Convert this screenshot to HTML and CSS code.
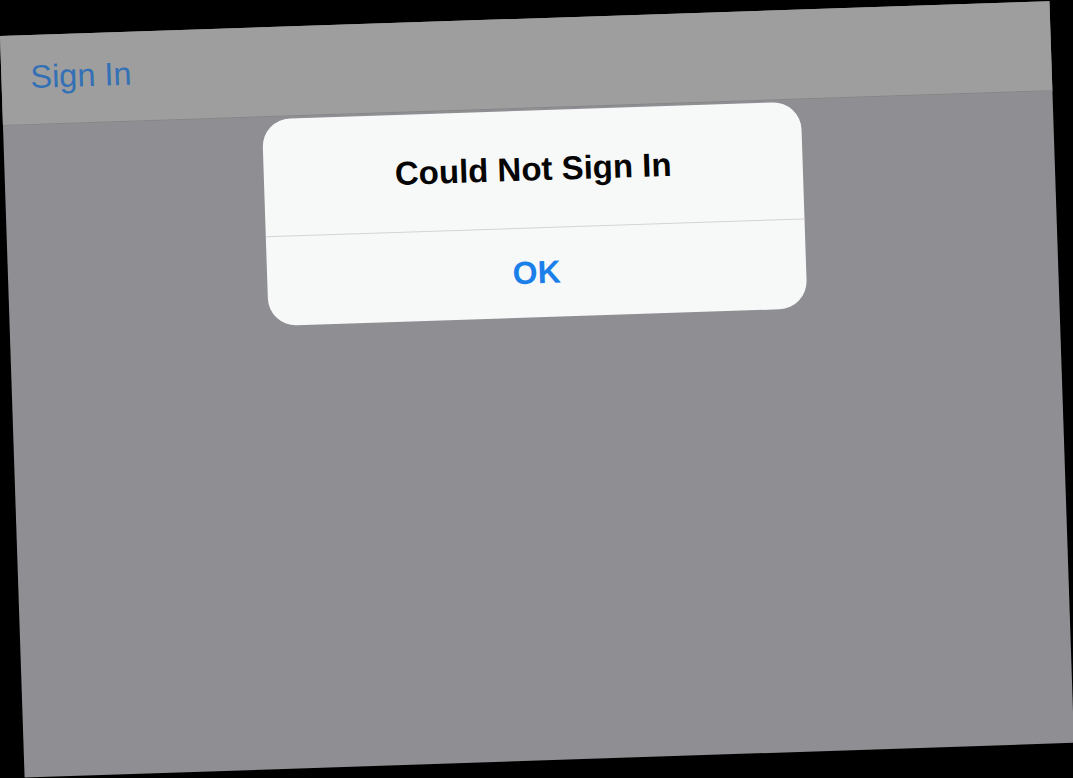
FILE: index.html
```html
<!DOCTYPE html>
<html>
<head>
<meta charset="utf-8">
<link rel="stylesheet" href="styles.css">
</head>
<body>
<div class="screen">
  <div class="navbar"><span class="nav-link">Sign In</span></div>
  <div class="content">
    <div class="alert">
      <div class="alert-title">Could Not Sign In</div>
      <div class="alert-button">OK</div>
    </div>
  </div>
</div>
</body>
</html>
```
FILE: styles.css
```css
html, body {
  margin: 0;
  padding: 0;
}
body {
  background: #000;
  width: 1073px;
  height: 778px;
  overflow: hidden;
  font-family: "Liberation Sans", Arial, sans-serif;
}
.screen {
  width: 1050px;
  height: 742px;
  margin-top: 36px;
  transform-origin: 0 0;
  transform: rotate(-1.9deg);
  background: #8f8e93;
  display: flex;
  flex-direction: column;
}
.navbar {
  height: 90px;
  box-sizing: border-box;
  background: #9e9e9e;
  border-bottom: 1px solid #858587;
  padding: 26px 0 0 29px;
  font-size: 32.5px;
  line-height: 32px;
  color: #3470b5;
}
.content {
  flex: 1;
  padding: 2px 0 0 259px;
}
.alert {
  width: 539px;
  height: 207px;
  background: #f7f8f8;
  border-radius: 28px;
  display: flex;
  flex-direction: column;
  overflow: hidden;
}
.alert-title {
  height: 118px;
  display: flex;
  align-items: center;
  justify-content: center;
  font-size: 33px;
  font-weight: 700;
  color: #050505;
  border-bottom: 1px solid #d4d4d7;
  box-sizing: border-box;
}
.alert-button {
  flex: 1;
  display: flex;
  align-items: center;
  justify-content: center;
  font-size: 32px;
  font-weight: 700;
  color: #1a7fe9;
}
```
